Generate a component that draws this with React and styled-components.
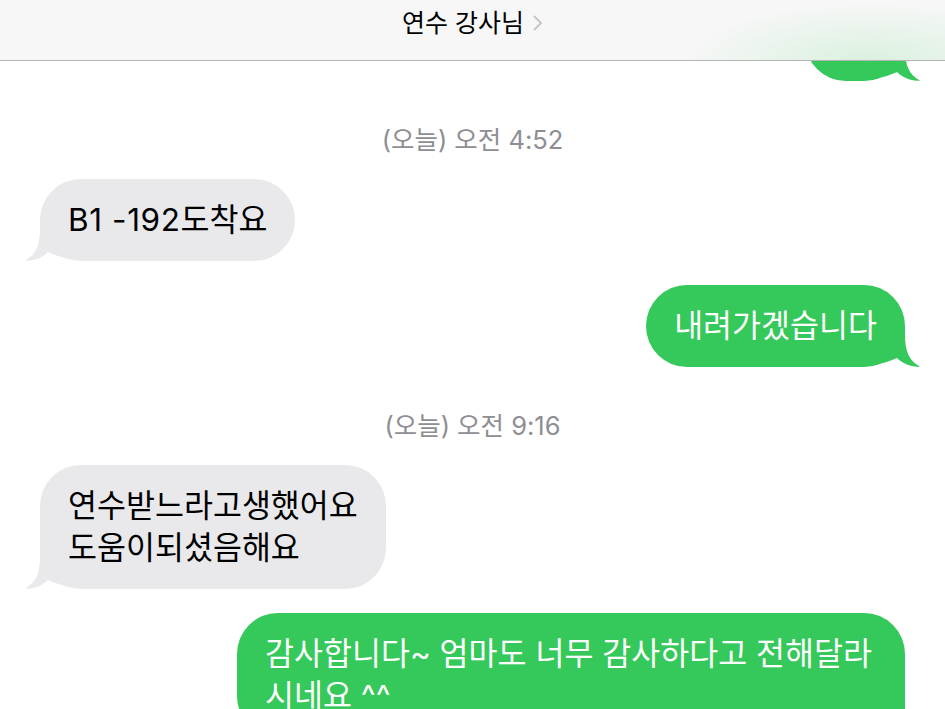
import React from "react";
import styled, { createGlobalStyle } from "styled-components";

const GlobalStyle = createGlobalStyle`
  html, body {
    margin: 0;
    padding: 0;
    background: #ffffff;
  }
  body {
    font-family: Inter, "Noto Sans CJK KR", sans-serif;
    -webkit-font-smoothing: antialiased;
  }
`;

const Screen = styled.div`
  position: relative;
  width: 945px;
  height: 709px;
  overflow: hidden;
  background: #ffffff;
`;

const Header = styled.header`
  position: absolute;
  top: 0;
  left: 0;
  right: 0;
  height: 61px;
  z-index: 5;
  display: flex;
  justify-content: center;
  align-items: flex-start;
  padding-top: 5px;
  box-sizing: border-box;
  background:
    radial-gradient(ellipse 190px 60px at 870px 62px, rgba(214, 240, 220, 0.9), rgba(214, 240, 220, 0) 100%),
    #f7f7f7;
  border-bottom: 1px solid #b5b5b8;
`;

const Title = styled.button`
  display: flex;
  align-items: center;
  gap: 8px;
  border: 0;
  background: none;
  padding: 0;
  font-family: Inter, "Noto Sans CJK KR", sans-serif;
  font-size: 25px;
  line-height: 36px;
  color: #000000;
  cursor: pointer;
`;

const Thread = styled.main`
  display: flex;
  flex-direction: column;
  gap: 24px;
  padding: 0 40px;
  margin-top: -1px;
`;

const Stamp = styled.div`
  margin-top: 20px;
  text-align: center;
  font-size: 25.5px;
  line-height: 30px;
  color: #8e8e93;
`;

const Bubble = styled.div`
  position: relative;
  z-index: 0;
  align-self: ${(p) => (p.$sent ? "flex-end" : "flex-start")};
  max-width: 668px;
  min-width: ${(p) => p.$minWidth || 0}px;
  min-height: 82px;
  box-sizing: border-box;
  padding: 20px 28px;
  border-radius: 41px;
  background: ${(p) => (p.$sent ? "#35c85a" : "#e9e9eb")};
  color: ${(p) => (p.$sent ? "#ffffff" : "#000000")};
  font-size: 31.5px;
  line-height: 42px;
  word-break: keep-all;
`;

const Latin = styled.span`
  letter-spacing: 0.6px;
`;

const Tail = styled.svg`
  position: absolute;
  bottom: 0;
  z-index: -1;
  width: 48px;
  height: 40px;
  ${(p) =>
    p.$sent
      ? "right: -18px;"
      : "left: -18px; transform: scaleX(-1);"}
`;

function BubbleTail({ sent, color }) {
  return (
    <Tail $sent={sent} viewBox="0 0 48 40" aria-hidden="true">
      <path
        d="M0 0 H30 V8 C30 24 34 34 45 39.5 C37 40.5 28 37 22 31 C16 34 8 36 0 38 Z"
        fill={color}
      />
    </Tail>
  );
}

function Message({ sent, children, minWidth }) {
  return (
    <Bubble $sent={sent} $minWidth={minWidth}>
      {children}
      <BubbleTail sent={sent} color={sent ? "#35c85a" : "#e9e9eb"} />
    </Bubble>
  );
}

const Lines = styled.span`
  white-space: pre-line;
`;

export default function App() {
  return (
    <>
      <GlobalStyle />
      <Screen>
        <Header>
          <Title>
            연수 강사님
            <svg width="11" height="18" viewBox="0 0 11 18" aria-hidden="true">
              <path d="M2 2 L9 9 L2 16" fill="none" stroke="#c4c4c8" strokeWidth="1.8" />
            </svg>
          </Title>
        </Header>
        <Thread>
          <Message sent minWidth={100} />
          <Stamp>(오늘) 오전 4:52</Stamp>
          <Message>
            <Latin>B1 -192</Latin>도착요
          </Message>
          <Message sent>내려가겠습니다</Message>
          <Stamp>(오늘) 오전 9:16</Stamp>
          <Message>
            <Lines>{"연수받느라고생했어요\n도움이되셨음해요"}</Lines>
          </Message>
          <Message sent>감사합니다~ 엄마도 너무 감사하다고 전해달라 시네요 ^^</Message>
        </Thread>
      </Screen>
    </>
  );
}
